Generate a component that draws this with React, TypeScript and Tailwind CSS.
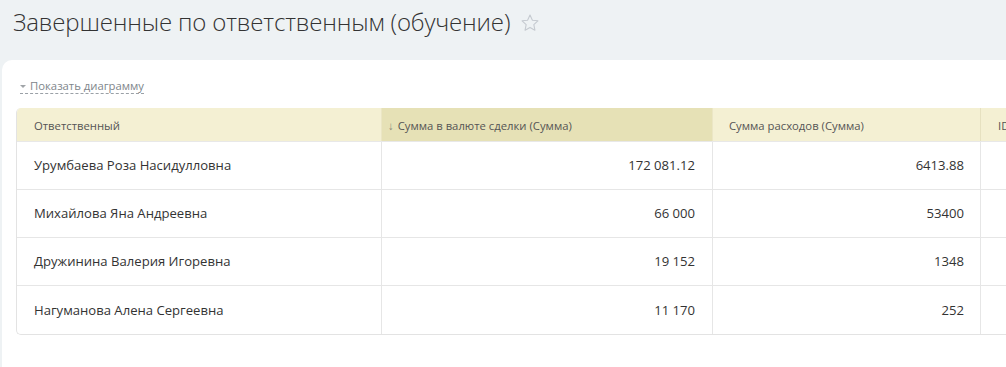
const rows = [
  { name: "Урумбаева Роза Насидулловна", sum: "172 081.12", cost: "6413.88" },
  { name: "Михайлова Яна Андреевна", sum: "66 000", cost: "53400" },
  { name: "Дружинина Валерия Игоревна", sum: "19 152", cost: "1348" },
  { name: "Нагуманова Алена Сергеевна", sum: "11 170", cost: "252" },
];

export default function App() {
  return (
    <div className="w-[1006px] h-[367px] overflow-hidden bg-[#eef2f4] font-['Open_Sans',sans-serif] text-[#333]">
      {/* Title */}
      <div className="flex items-center h-[60px] pl-[13px] pb-[16px]">
        <h1 className="text-[24px] font-light text-[#333] tracking-[-0.15px] leading-none">
          Завершенные по ответственным (обучение)
        </h1>
        <svg className="ml-[10px] mt-[1px]" width="20" height="20" viewBox="0 0 24 24" fill="none" stroke="#c5cad0" strokeWidth="1.3" strokeLinejoin="round">
          <path d="M12 2.5l2.9 6.1 6.6.8-4.9 4.6 1.3 6.6L12 17.3l-5.9 3.3 1.3-6.6-4.9-4.6 6.6-.8z" />
        </svg>
      </div>

      {/* Panel */}
      <div className="ml-[2px] h-[400px] bg-white rounded-tl-[10px] pl-[14px] pt-[18px]">
        <div className="flex items-center h-[16px] ml-[4px] mb-[14px]">
          <span className="inline-flex items-center border-b border-dashed border-[#9aa0a6] text-[11.3px] leading-[15px] text-[#80868b]">
            <span className="w-0 h-0 mr-[4px] mt-[2px] border-l-[3px] border-r-[3px] border-t-[3px] border-l-transparent border-r-transparent border-t-[#a0a4a8]" />
            Показать диаграмму
          </span>
        </div>

        <div className="w-[1100px] border-l border-b border-[#e3e3e3] rounded-tl-[5px] rounded-bl-[5px] overflow-hidden">
          {/* Header */}
          <div className="flex h-[34px] bg-[#f4f0d3] border-b border-[#e8e8e8] text-[11.3px] text-[#555]">
            <div className="w-[365px] flex items-center pt-[3px] pl-[17px] border-r border-[#ebe6c5]">Ответственный</div>
            <div className="w-[331px] flex items-center pt-[3px] pl-[6px] bg-[#e6e1b6] border-r border-[#ebe6c5]">
              <span className="text-[#8a8a7a] mr-[4px]">↓</span>Сумма в валюте сделки (Сумма)
            </div>
            <div className="w-[268px] flex items-center pt-[3px] pl-[16px] border-r border-[#e6e1c0]">Сумма расходов (Сумма)</div>
            <div className="flex-1 flex items-center pt-[3px] pl-[17px]">ID</div>
          </div>

          {/* Rows */}
          {rows.map((r, i) => (
            <div
              key={r.name}
              className={`flex h-[48px] text-[13.1px] text-[#333] ${i < rows.length - 1 ? "border-b border-[#e6e6e6]" : ""}`}
            >
              <div className="w-[365px] flex items-center pt-[1px] pl-[17px] border-r border-[#e6e6e6]">{r.name}</div>
              <div className="w-[331px] flex items-center justify-end pt-[1px] pr-[17px] border-r border-[#e6e6e6]">{r.sum}</div>
              <div className="w-[268px] flex items-center justify-end pt-[1px] pr-[16px] border-r border-[#e6e6e6]">{r.cost}</div>
              <div className="flex-1" />
            </div>
          ))}
        </div>
      </div>
    </div>
  );
}
